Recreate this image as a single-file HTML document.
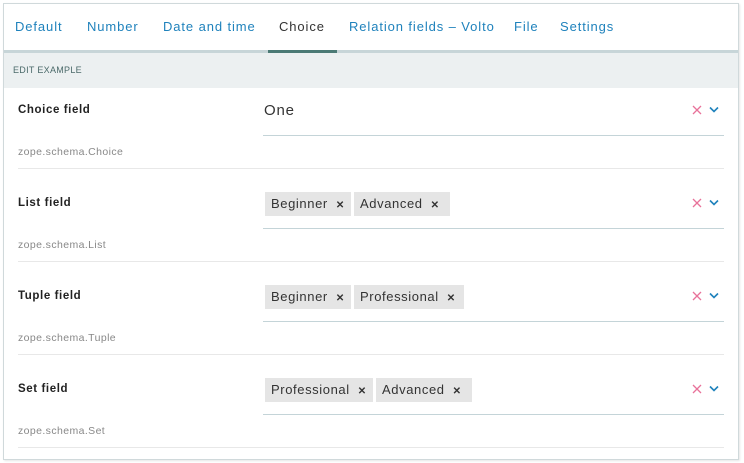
<!DOCTYPE html>
<html><head><style>
*{margin:0;padding:0;box-sizing:border-box}
body{width:744px;height:463px;background:#fff;font-family:"Liberation Sans",sans-serif;position:relative;overflow:hidden}
.box{position:absolute;left:3px;top:3px;width:736px;height:457px;border:1px solid #d0d9db;box-shadow:1px 1px 2px rgba(0,0,0,.1)}
.tab{position:absolute;top:19px;font-size:13px;color:#1f82bc;letter-spacing:.9px}
.a{position:absolute}
.lbl{position:absolute;left:18px;font-size:11.5px;font-weight:bold;color:#222;letter-spacing:.6px}
.desc{position:absolute;left:18px;font-size:10.5px;color:#888;letter-spacing:.4px}
.ul{position:absolute;left:263px;width:461px;height:1px;background:#c4d4d8}
.sep{position:absolute;left:18px;width:706px;height:1px;background:#e8e8e8}
.tag{position:absolute;height:24px;background:#e5e5e5;font-size:13px;color:#333;line-height:24px;padding-left:6px;letter-spacing:.6px}
.tag b{font-size:10px;margin-left:8px}
.ic{position:absolute;left:691px}
</style></head><body>
<div class="box"></div>
<div class="tab" style="left:15px">Default</div>
<div class="tab" style="left:87px">Number</div>
<div class="tab" style="left:163px">Date and time</div>
<div class="tab" style="left:279px;color:#333">Choice</div>
<div class="tab" style="left:349px">Relation fields – Volto</div>
<div class="tab" style="left:514px">File</div>
<div class="tab" style="left:560px">Settings</div>
<div class="a" style="left:4px;top:50px;width:734px;height:3px;background:#c7d5d8"></div>
<div class="a" style="left:268px;top:50px;width:69px;height:3px;background:#4b7a75"></div>
<div class="a" style="left:4px;top:53px;width:734px;height:35px;background:#ecf0f1"></div>
<div class="a" style="left:13px;top:65px;font-size:9px;color:#4b6a6a;letter-spacing:.3px">EDIT EXAMPLE</div>

<div class="lbl" style="top:104px">Choice field</div>
<div class="a" style="left:264px;top:102px;font-size:15px;color:#333;letter-spacing:.8px">One</div>
<div class="ul" style="top:135px"></div>
<div class="desc" style="top:146px">zope.schema.Choice</div>
<div class="sep" style="top:168px"></div>

<div class="lbl" style="top:197px">List field</div>
<div class="tag" style="left:265px;top:192px;width:86px">Beginner<b>✕</b></div>
<div class="tag" style="left:354px;top:192px;width:96px">Advanced<b>✕</b></div>
<div class="ul" style="top:228px"></div>
<div class="desc" style="top:239px">zope.schema.List</div>
<div class="sep" style="top:261px"></div>

<div class="lbl" style="top:290px">Tuple field</div>
<div class="tag" style="left:265px;top:285px;width:86px">Beginner<b>✕</b></div>
<div class="tag" style="left:354px;top:285px;width:110px">Professional<b>✕</b></div>
<div class="ul" style="top:321px"></div>
<div class="desc" style="top:332px">zope.schema.Tuple</div>
<div class="sep" style="top:354px"></div>

<div class="lbl" style="top:383px">Set field</div>
<div class="tag" style="left:265px;top:378px;width:108px">Professional<b>✕</b></div>
<div class="tag" style="left:376px;top:378px;width:96px">Advanced<b>✕</b></div>
<div class="ul" style="top:414px"></div>
<div class="desc" style="top:425px">zope.schema.Set</div>
<div class="sep" style="top:447px"></div>

<svg class="ic" style="top:104px" width="32" height="12"><path d="M2 2l8 8M10 2l-8 8" stroke="#e8729a" stroke-width="1.3"/><path d="M19 3.5l4 4 4-4" stroke="#1f82bc" stroke-width="1.6" fill="none"/></svg>
<svg class="ic" style="top:197px" width="32" height="12"><path d="M2 2l8 8M10 2l-8 8" stroke="#e8729a" stroke-width="1.3"/><path d="M19 3.5l4 4 4-4" stroke="#1f82bc" stroke-width="1.6" fill="none"/></svg>
<svg class="ic" style="top:290px" width="32" height="12"><path d="M2 2l8 8M10 2l-8 8" stroke="#e8729a" stroke-width="1.3"/><path d="M19 3.5l4 4 4-4" stroke="#1f82bc" stroke-width="1.6" fill="none"/></svg>
<svg class="ic" style="top:383px" width="32" height="12"><path d="M2 2l8 8M10 2l-8 8" stroke="#e8729a" stroke-width="1.3"/><path d="M19 3.5l4 4 4-4" stroke="#1f82bc" stroke-width="1.6" fill="none"/></svg>
</body></html>
